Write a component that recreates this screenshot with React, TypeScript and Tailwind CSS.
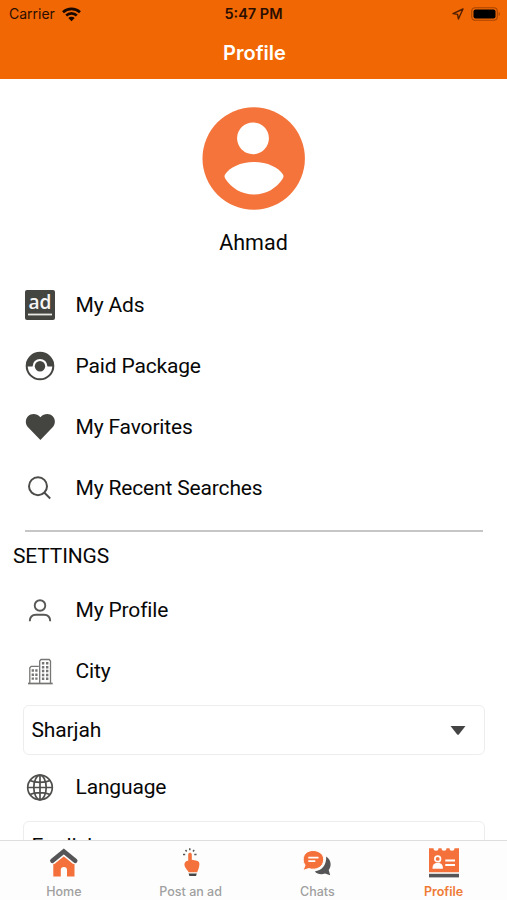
import type { ReactNode } from "react";

const menuItems = [
  { id: 1, label: "My Ads", icon: <AdIcon /> },
  { id: 2, label: "Paid Package", icon: <PackageIcon /> },
  { id: 3, label: "My Favorites", icon: <HeartIcon /> },
  { id: 4, label: "My Recent Searches", icon: <SearchIcon /> },
];

const tabs = [
  { id: 1, label: "Home", icon: <HomeIcon />, active: false },
  { id: 2, label: "Post an ad", icon: <PostIcon />, active: false },
  { id: 3, label: "Chats", icon: <ChatsIcon />, active: false },
  { id: 4, label: "Profile", icon: <ProfileTabIcon />, active: true },
];

function AdIcon() {
  return (
    <svg className="w-10 h-10" viewBox="0 0 40 40">
      <rect x="5" y="5" width="30" height="30" rx="2" fill="#444440" />
      <text x="20" y="24" textAnchor="middle" textLength="23" lengthAdjust="spacingAndGlyphs" fontFamily="Open Sans" fontWeight="600" fontSize="19" fill="#f6f6f4">ad</text>
      <rect x="8" y="28.6" width="24" height="1.8" fill="#e8e8e6" />
    </svg>
  );
}

function PackageIcon() {
  return (
    <svg className="w-10 h-10" viewBox="0 0 40 40">
      <circle cx="20" cy="20" r="13.3" fill="white" stroke="#444440" strokeWidth="2" />
      <path d="M6 20.5a14 14 0 0 1 28 0z" fill="#444440" />
      <circle cx="20" cy="20.3" r="7.4" fill="white" />
      <circle cx="20" cy="20.3" r="5.2" fill="#444440" />
    </svg>
  );
}

function HeartIcon() {
  return (
    <svg className="w-10 h-10" viewBox="0 0 40 40" fill="#444440">
      <path d="M20.4 33 8.3 20.6C5 17 5.2 12 8 9.2C11.5 6 17 6.5 20.4 10.2C23.8 6.5 29.3 6 32.7 9.2C35.6 12 35.7 17 32.4 20.6Z" />
    </svg>
  );
}

function SearchIcon() {
  return (
    <svg className="w-10 h-10" viewBox="0 0 40 40" fill="none" stroke="#4c4c4a" strokeWidth="2">
      <circle cx="18" cy="18.2" r="9" />
      <path d="m24.2 24.5 6 6" />
    </svg>
  );
}

function UserIcon() {
  return (
    <svg className="w-10 h-10" viewBox="0 0 40 40" fill="none" stroke="#585856" strokeWidth="1.9">
      <circle cx="20" cy="15.5" r="5.3" />
      <path d="M9.8 31.3c0-4.500 2-6.600 6.300-6.600h7.800c4.300 0 6.300 2.100 6.300 6.600" />
    </svg>
  );
}

function CityIcon() {
  return (
    <svg className="w-10 h-10" viewBox="0 0 40 40" fill="none" stroke="#757573" strokeWidth="1.3">
      <path d="M8 32.5h24.700" strokeWidth="1.7" />
      <path d="M9.800 32V16.800l1.400-1.500h7.600M19.700 32V10l1.300-1.500h8.200l1.300 1.500V32" />
      <path d="M12.800 18.200v10.500M16.400 18.200v10.500" strokeWidth="2.3" strokeDasharray="2.5 1.7" />
      <path d="M23.100 11v18M27.200 11v18" strokeWidth="2.4" strokeDasharray="2.5 1.4" />
    </svg>
  );
}

function GlobeIcon() {
  return (
    <svg className="w-10 h-10" viewBox="0 0 40 40" fill="none" stroke="#4f4f4d" strokeWidth="1.7">
      <circle cx="20" cy="20.5" r="12.3" />
      <ellipse cx="20" cy="20.5" rx="6.2" ry="12.3" />
      <path d="M20 8.100v24.800M7.600 20.500h24.800M9.800 13.500c5.500 2.400 14.900 2.400 20.400 0M9.800 27.500c5.500-2.400 14.900-2.400 20.400 0" />
    </svg>
  );
}

function HomeIcon() {
  return (
    <svg className="w-8 h-8" viewBox="0 0 32 32">
      <path d="M6.300 17 16.800 8l10.700 9v12.500H20V23a3.100 3.100 0 0 0-6.200 0v6.500H6.300z" fill="#f4713b" />
      <path d="M5.100 14.600 16.800 5.300l11.700 9.300" fill="none" stroke="white" strokeWidth="6.500" />
      <path d="M5.400 13.700 16.800 4.500l11.400 9.200" fill="none" stroke="#555557" strokeWidth="4.6" strokeLinecap="round" />
    </svg>
  );
}

function PostIcon() {
  return (
    <svg className="w-8 h-8" viewBox="0 0 32 32">
      <path d="M14.200 7.500c0-2.400 3.600-2.400 3.600 0v5.200l5 1.100c2 .4 2.700 1.500 2.600 3.500-.2 4-1.300 5.500-2.200 8H14.600c-.5-1.700-4-4-4.200-7.700-.1-1.900 1.400-3.700 3.800-3.800z" fill="#f4713b" />
      <path d="M15.800 1.300v2M11.500 3l1.200 1.500M20.200 3 19 4.500M9 7.400h2.200M20.300 7.400h2.200" stroke="#555" strokeWidth="1.5" />
      <path d="M14.600 26.600h8.200l-.8 2.500h-6.600z" fill="#444" />
    </svg>
  );
}

function ChatsIcon() {
  return (
    <svg className="w-8 h-8" viewBox="0 0 32 32">
      <path d="M25.200 9.500c5.200 3.700 5.600 9.500 2.500 13.500l1.500 5.200-5.200-1.600c-4 1.300-8 .4-10.200-2.200 6.800-1 11.700-5.600 11.400-14.900z" fill="#555557" />
      <path d="M12 3.500C6.500 3.500 2.200 7.100 2.200 12.400c0 2.300.7 4.200 1.900 5.700L2 23.500l5.700-1.900c7.500 2.100 15-1.400 15-9.200 0-5.200-4.700-8.900-10.700-8.900z" fill="#f4713b" stroke="white" strokeWidth="1" />
      <path d="M7.300 10.600h10.200M7.300 14.200h7" stroke="white" strokeWidth="1.7" />
    </svg>
  );
}

function ProfileTabIcon() {
  return (
    <svg className="w-8 h-8" viewBox="0 0 32 32">
      <path d="M1 1.200h4.500a2.500 2.500 0 0 0 5 0h3a2.500 2.500 0 0 0 5 0h3a2.500 2.500 0 0 0 5 0H31v24H1z" fill="#f4713b" />
      <circle cx="9.700" cy="11.900" r="2.800" fill="none" stroke="white" strokeWidth="1.7" />
      <path d="M4.500 21.700c0-4 1.500-5.700 5.200-5.700s5.200 1.700 5.200 5.700z" fill="white" />
      <path d="M17.300 13.500h9.700M17.300 18h9.700" stroke="white" strokeWidth="2" />
      <path d="M1 28.600h30" stroke="#555557" strokeWidth="3.6" />
    </svg>
  );
}

function MenuRow({ icon, label }: { icon: ReactNode; label: string }) {
  return (
    <div className="flex items-center h-[61px] shrink-0 pl-5">
      {icon}
      <span className="pl-[15.5px] pt-[2px] text-[21px] tracking-[-0.16px]">{label}</span>
    </div>
  );
}

function SelectBox({ value }: { value: string }) {
  return (
    <div className="flex items-center justify-between h-[50px] shrink-0 ml-[23px] mr-[22px] pl-[7.5px] pr-[18px] rounded-md border border-[#ededed]">
      <span className="pt-[2px] text-[21px] tracking-[-0.12px]">{value}</span>
      <svg className="w-4 h-[9px]" viewBox="0 0 16 9">
        <path d="M.5 0h15L9 8.300Q8 9.300 7 8.300z" fill="#444" />
      </svg>
    </div>
  );
}

export default function App() {
  return (
    <div className="flex flex-col h-[900px] w-full overflow-hidden bg-white text-[#080808] font-['Roboto',sans-serif]">
      {/* Header */}
      <header className="h-[79px] shrink-0 bg-[#f16704]">
        <div className="grid grid-cols-3 items-center h-7 pl-[9px] pr-[6px] text-[#2a0e00] font-['Inter',sans-serif]">
          <div className="flex items-center gap-[7px]">
            <span className="text-sm">Carrier</span>
            <svg className="w-[19px] h-[15px]" viewBox="0 0 19 15" fill="none" stroke="#180800" strokeWidth="2.6">
              <path d="M1 5.200C5.700.7 13.300.7 18 5.200M4.200 8.500c3-2.900 7.600-2.900 10.600 0" />
              <path d="M6.300 11c1.700-1.600 4.700-1.600 6.400 0l-3.200 3.300z" fill="#180800" stroke="none" />
            </svg>
          </div>
          <span className="pr-[3px] text-center text-[14.5px] font-semibold">5:47 PM</span>
          <div className="flex items-center justify-end gap-[7px]">
            <svg className="w-3 h-3" viewBox="0 0 12 12" fill="none" stroke="#521f00" strokeWidth="1.4">
              <path d="M11 1 1 5.600l4.600.8.800 4.600z" strokeLinejoin="round" />
            </svg>
            <svg className="w-[30px] h-[14px]" viewBox="0 0 30 14">
              <rect x=".7" y=".7" width="25.600" height="12.600" rx="3.500" fill="none" stroke="#a84500" strokeWidth="1.1" />
              <rect x="2.500" y="2.500" width="22" height="9" rx="2" fill="#000" />
              <path d="M27.700 5c1.700.6 1.700 3.400 0 4z" fill="#a84500" />
            </svg>
          </div>
        </div>
        <h1 className="pl-[2px] text-center text-xl leading-[50px] font-semibold text-white font-['Inter',sans-serif]">Profile</h1>
      </header>

      {/* Profile content */}
      <main className="flex flex-col flex-1 min-h-0 overflow-hidden">
        <div className="flex flex-col items-center shrink-0 pt-7 h-[195px]">
          <svg className="w-[103px] h-[103px] shrink-0" viewBox="0 0 103 103">
            <circle cx="51.700" cy="51.500" r="51.200" fill="#f4743b" />
            <circle cx="51" cy="31.300" r="15.900" fill="white" />
            <path d="M52 55C65.500 55 76.500 60.500 81 67.500Q82.200 69.700 80.500 72C74.500 81 64.500 87.500 52 87.500S29.500 81 23.500 72Q21.800 69.700 23 67.500C27.500 60.500 38.500 55 52 55z" fill="white" />
          </svg>
          <span className="mt-[18px] text-[21.5px] leading-[29px]">Ahmad</span>
        </div>

        {menuItems.map(item => (
          <MenuRow key={item.id} icon={item.icon} label={item.label} />
        ))}

        <div className="ml-[25px] mr-6 mt-3 h-[2px] shrink-0 bg-[#c6c6c6]" />

        {/* Settings */}
        <h2 className="pl-[13px] pt-2 h-[47px] shrink-0 text-[21px] leading-[32px] tracking-[-0.16px]">SETTINGS</h2>
        <MenuRow icon={<UserIcon />} label="My Profile" />
        <MenuRow icon={<CityIcon />} label="City" />
        <div className="mt-1 mb-px flex flex-col shrink-0">
          <SelectBox value="Sharjah" />
        </div>
        <MenuRow icon={<GlobeIcon />} label="Language" />
        <div className="mt-1 flex flex-col shrink-0">
          <SelectBox value="English" />
        </div>
      </main>

      {/* Bottom tabs */}
      <nav className="grid grid-cols-4 h-[60px] shrink-0 border-t border-[#dedede] bg-[#fdfdfd] font-['Inter',sans-serif]">
        {tabs.map(tab => (
          <div key={tab.id} className="flex flex-col items-center pt-[6px]">
            {tab.icon}
            <span className={tab.active ? "mt-[5px] text-[12.5px] leading-4 font-semibold text-[#ef7a35]" : "mt-[5px] pl-px text-[12.5px] leading-4 font-medium text-[#a0a0a0]"}>
              {tab.label}
            </span>
          </div>
        ))}
      </nav>
    </div>
  );
}
